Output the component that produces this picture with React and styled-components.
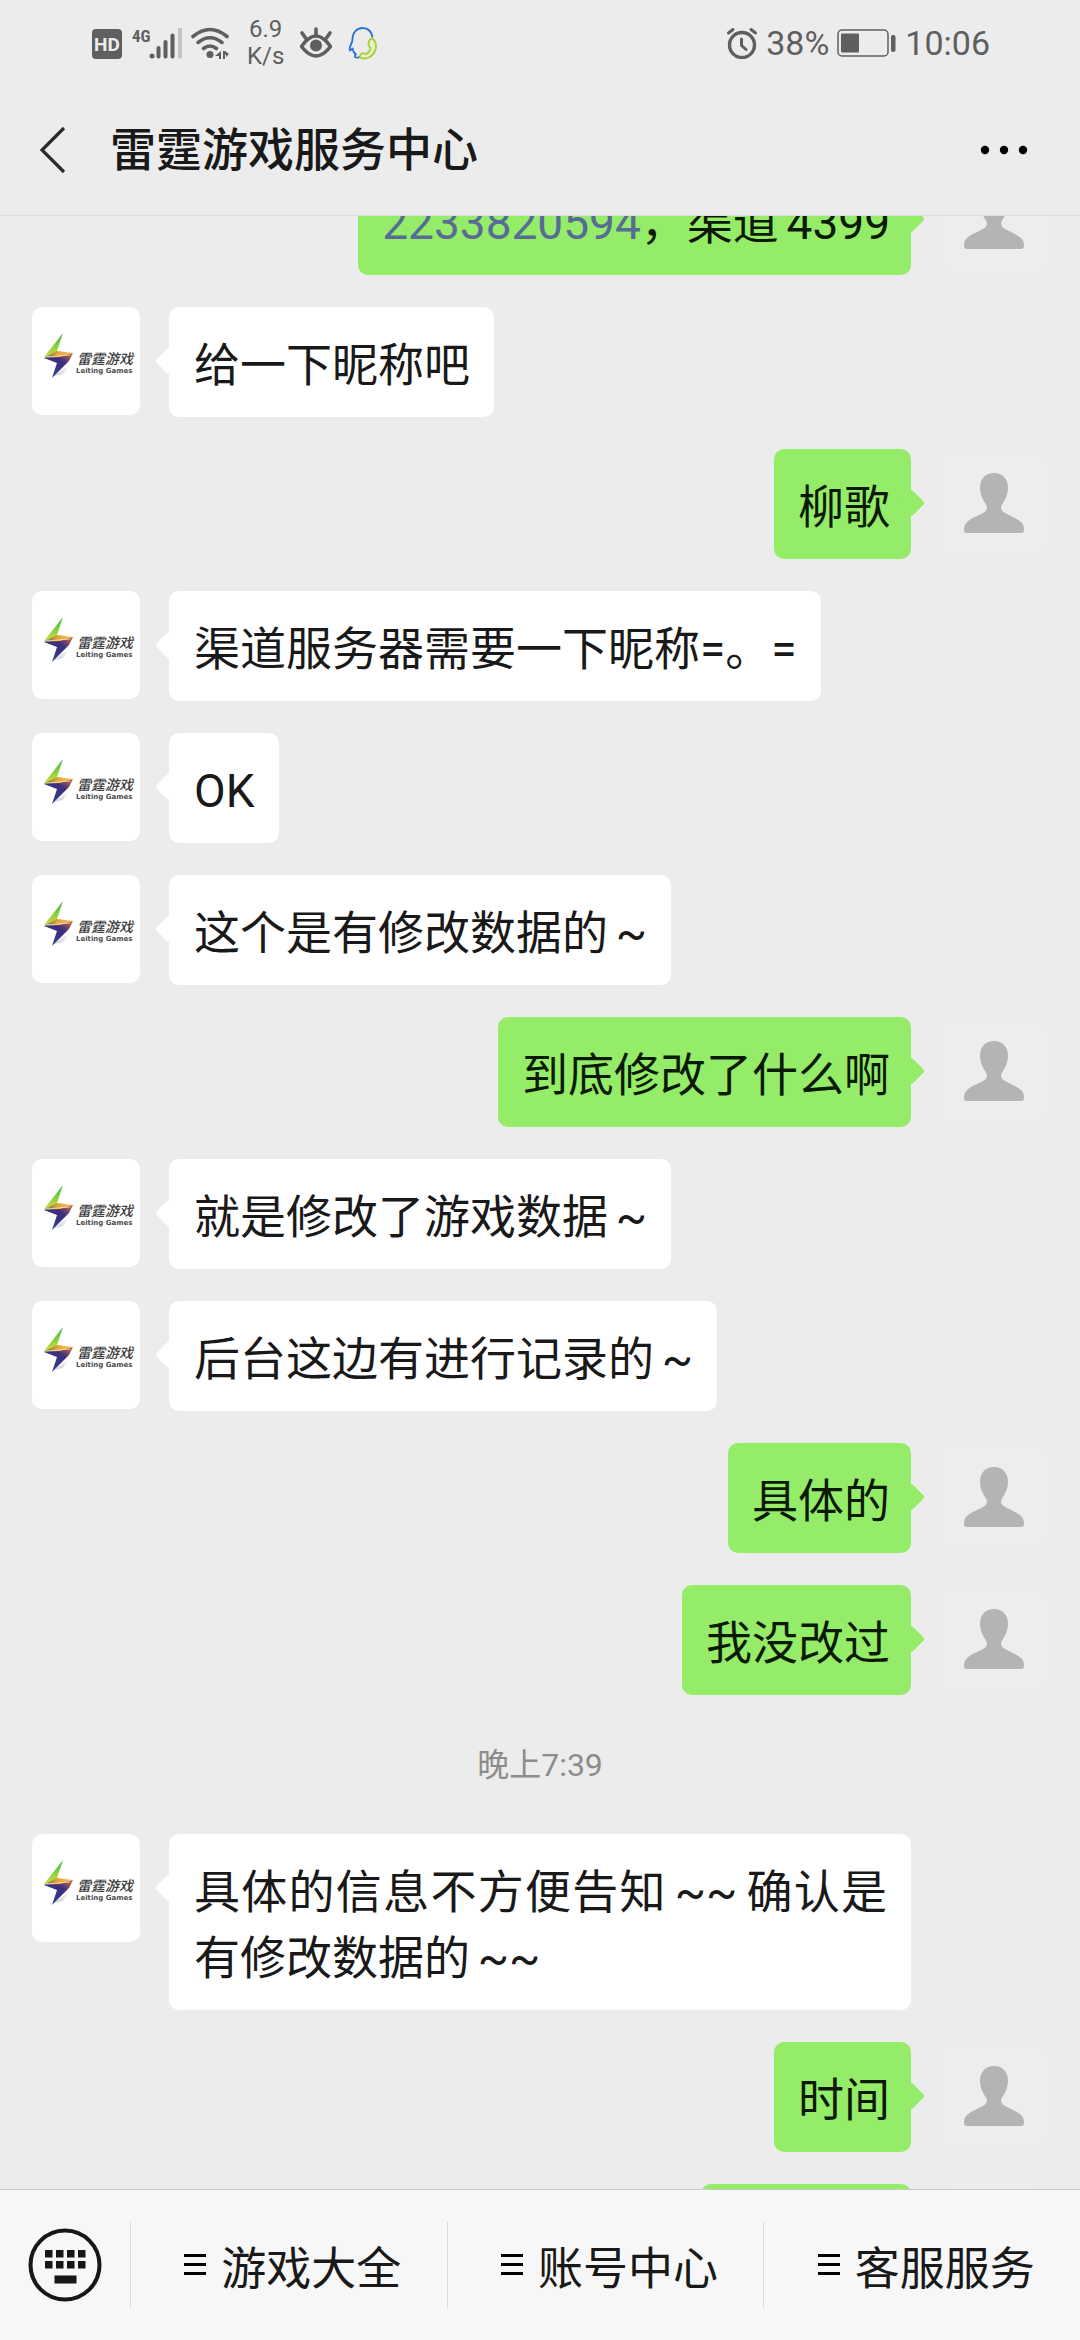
import { useLayoutEffect, useRef } from "react";
import styled, { createGlobalStyle } from "styled-components";

// \u2006 is a narrow space between Chinese and the half-width signs
const MESSAGES = [
  { id: 1, mine: true, link: "2233820594", text: "，渠道\u20064399" },
  { id: 2, text: "给一下昵称吧" },
  { id: 3, mine: true, text: "柳歌" },
  { id: 4, text: "渠道服务器需要一下昵称=。=" },
  { id: 5, text: "OK" },
  { id: 6, text: "这个是有修改数据的\u2006~" },
  { id: 7, mine: true, text: "到底修改了什么啊" },
  { id: 8, text: "就是修改了游戏数据\u2006~" },
  { id: 9, text: "后台这边有进行记录的\u2006~" },
  { id: 10, mine: true, text: "具体的" },
  { id: 11, mine: true, text: "我没改过" },
  { id: 12, time: "晚上7:39" },
  { id: 13, text: "具体的信息不方便告知\u2006~~\u2006确认是有修改数据的\u2006~~" },
  { id: 14, mine: true, text: "时间" },
  { id: 15, mine: true, text: "" },
];

const MENUS = ["游戏大全", "账号中心", "客服服务"];

// how far the conversation is scrolled when the page opens
const START_SCROLL = 51;

const NetworkIcons = () => (
  <svg width="140" height="34" viewBox="0 0 140 34" fill="#5f5f5f">
    <rect x="0" y="3" width="30" height="30" rx="4" />
    <text x="15" y="25" textAnchor="middle" fontSize="19" fontWeight="700" fill="#ececec">
      HD
    </text>
    <text x="40" y="16" fontSize="17" fontWeight="700" fontFamily="Roboto Condensed, Roboto">
      4G
    </text>
    <circle cx="60" cy="30" r="2.5" />
    <rect x="64.500" y="20" width="4" height="12.500" rx="2" />
    <rect x="71.500" y="14" width="4" height="18.500" rx="2" />
    <rect x="78.500" y="7.500" width="4" height="25" rx="2" />
    <rect x="86" y="2" width="4" height="30.500" rx="1" fill="#c4c4c4" />
    <g fill="none" stroke="#5f5f5f" strokeWidth="3.600" strokeLinecap="round">
      <path d="M101 10.500 Q118 -3.500 135 10.500" />
      <path d="M106 16.500 Q118 7 130 16.500" />
      <path d="M111.500 22.500 Q118 17.500 124.500 22.500" />
    </g>
    <circle cx="118" cy="28.500" r="3.500" />
    <path d="M129 25 v8 h-2 v-3 l-4 0 z M131 33 v-8 h2 l4 3 l-3 3 v-2.500 h-1 v4.500 z" />
  </svg>
);

const EyeIcon = () => (
  <svg width="34" height="32" viewBox="0 0 34 32">
    <g fill="none" stroke="#5f5f5f" strokeWidth="3.600" strokeLinecap="round">
      <path d="M2.500 19.500 Q17 -1.500 31.500 19.500 Q17 38.500 2.500 19.500 Z" strokeLinejoin="round" />
      <path d="M17 8 V2 M6.500 11 L3 6 M27.500 11 L31 6" />
    </g>
    <circle cx="17" cy="18.500" r="6" fill="#5f5f5f" />
  </svg>
);

const ServiceIcon = () => (
  <svg width="30" height="34" viewBox="0 0 30 34" fill="none" strokeWidth="1.800" strokeLinejoin="round">
    <path
      d="M24.500 11.500 C23.500 5 19.500 2 14.500 2 C8.500 2 4.500 7 4.500 13 C4.500 15 4 16.500 3 18.500 C1.500 21.500 1.500 23.500 2 24.500 C3 24.500 3.500 23 4.500 22.500 C5 25.500 6.500 27.500 8 28.500 C6.500 29.500 6 31 8 31.500 C9.500 32 12 31 13 30.500"
      stroke="#2a72d8"
    />
    <path
      d="M23 12.500 C27 13 29.500 19 27 25 C24 31.500 18 33.500 13 32 C11.500 31 12 29 13.500 27.500 C15 26.500 16.500 28 18 28 C20.500 27 22 25 22.500 22.500 C22.500 21 20.500 20.500 20.500 18.500 C20.500 16 21.500 13.500 23 12.500 Z"
      stroke="#a8cf3c"
      fill="#e6f2c4"
    />
  </svg>
);

const AlarmIcon = () => (
  <svg width="32" height="32" viewBox="0 0 32 32" fill="none" stroke="#5f5f5f" strokeLinecap="round">
    <circle cx="16" cy="18" r="12.500" strokeWidth="3.400" />
    <path d="M15.500 12 V18.500 L20 22.500" strokeWidth="3" strokeLinejoin="round" />
    <path d="M2.500 6 L7 2.500 M29.500 6 L25 2.500" strokeWidth="3" />
  </svg>
);

const BatteryIcon = () => (
  <svg width="60" height="28" viewBox="0 0 60 28">
    <rect x="1" y="1" width="50" height="26" rx="4" fill="none" stroke="#5f5f5f" strokeWidth="1.500" />
    <rect x="4" y="4.500" width="18" height="19" rx="1" fill="#5f5f5f" />
    <rect x="54" y="6" width="4.500" height="17" rx="2" fill="#5f5f5f" />
  </svg>
);

const BackIcon = () => (
  <svg width="28" height="48" viewBox="0 0 28 48" fill="none" stroke="#2b2b2b" strokeWidth="3.200">
    <path d="M26 2 L4 24 L26 46" />
  </svg>
);

const MoreIcon = () => (
  <svg width="48" height="12" viewBox="0 0 48 12">
    <circle cx="5" cy="6" r="4.200" />
    <circle cx="24" cy="6" r="4.200" />
    <circle cx="43" cy="6" r="4.200" />
  </svg>
);

const PersonIcon = () => (
  <svg width="60" height="60" viewBox="0 0 60 60">
    <path
      d="M30 0 C21.500 0 16 6 16 14.500 C16 22 19 27 22 31.500 C23.500 34 23 37 20.500 39 C15 42.500 8 44.500 3 49 C0.500 51.500 0 53.500 0 57 C0 59 1 60 3 60 H57 C59 60 60 59 60 57 C60 53.500 59.500 51.500 57 49 C52 44.500 45 42.500 39.500 39 C37 37 36.500 34 38 31.500 C41 27 44 22 44 14.500 C44 6 38.500 0 30 0 Z"
      fill="#b4b4b4"
    />
  </svg>
);

const LeitingLogo = () => (
  <svg width="108" height="108" viewBox="0 0 108 108">
    <defs>
      <linearGradient id="boltTop" x1="0" y1="0" x2="0" y2="1">
        <stop offset="0" stopColor="#3fae4a" />
        <stop offset="0.600" stopColor="#8fd640" />
        <stop offset="1" stopColor="#d9d63c" />
      </linearGradient>
      <linearGradient id="boltMid" x1="0" y1="0" x2="1" y2="0">
        <stop offset="0" stopColor="#3c5a6e" />
        <stop offset="0.450" stopColor="#e8a23a" />
        <stop offset="1" stopColor="#f3c65a" />
      </linearGradient>
      <linearGradient id="boltLow" x1="1" y1="0" x2="0" y2="1">
        <stop offset="0" stopColor="#d8743c" />
        <stop offset="0.350" stopColor="#3d2f7c" />
        <stop offset="1" stopColor="#2b3f96" />
      </linearGradient>
      <linearGradient id="boltShade" x1="0" y1="1" x2="1" y2="0">
        <stop offset="0" stopColor="#c9cbd2" />
        <stop offset="1" stopColor="#ffffff" />
      </linearGradient>
    </defs>
    <path d="M22 69 L38 57 L31 67 Z" fill="url(#boltShade)" />
    <path d="M31 26 L12 50 L26 48 L30 45 L25 44 Z" fill="url(#boltTop)" />
    <path d="M12 51 L25 44 L41 46 L36 52 Z" fill="url(#boltMid)" />
    <path d="M12 51 L28 50 L41 46 L37 54 L20 71 L25 56 Z" fill="url(#boltLow)" />
    <path d="M14 50 L38 48" stroke="#fbe9b0" strokeWidth="0.800" />
    <text
      x="45"
      y="57"
      fontSize="14"
      fontWeight="500"
      fontStyle="italic"
      fill="#3c3c3c"
      fontFamily="Noto Sans CJK SC, sans-serif"
    >
      雷霆游戏
    </text>
    <text x="44" y="66" fontSize="7" fontWeight="700" fill="#4c4c4c" fontFamily="DejaVu Sans, sans-serif">
      Leiting Games
    </text>
  </svg>
);

const KeyboardIcon = () => (
  <svg width="74" height="74" viewBox="0 0 74 74" fill="#171717">
    <circle cx="37" cy="37" r="34.500" fill="none" stroke="#171717" strokeWidth="4" />
    {[17, 28, 39, 50].map((x) => (
      <path key={x} d={`M${x} 22 h7.500 v7.500 h-7.500 z M${x} 33 h7.500 v7.500 h-7.500 z`} />
    ))}
    <rect x="26.500" y="47.500" width="22" height="8" />
  </svg>
);

const MenuIcon = () => (
  <svg width="22" height="22" viewBox="0 0 22 22">
    <path d="M0 0 h22 v3 H0 z M0 9 h22 v3 H0 z M0 18 h22 v3 H0 z" />
  </svg>
);

const Message = ({ mine, link, text }) => (
  <MessageRow $mine={mine}>
    <Avatar $mine={mine}>{mine ? <PersonIcon /> : <LeitingLogo />}</Avatar>
    <Bubble $mine={mine} $blank={!text}>
      {link && <NumberLink href={`tel:${link}`}>{link}</NumberLink>}
      {text}
    </Bubble>
  </MessageRow>
);

const App = () => {
  const chatRef = useRef(null);

  useLayoutEffect(() => {
    chatRef.current.scrollTop = START_SCROLL;
  }, []);

  return (
    <Page lang="zh-CN">
      <GlobalStyle />
      <StatusBar>
        <StatusGroup $gap={15}>
          <NetworkIcons />
          <Speed>
            6.9
            <br />
            K/s
          </Speed>
          <EyeIcon />
          <ServiceIcon />
        </StatusGroup>
        <StatusGroup $gap={8}>
          <AlarmIcon />
          <span>38%</span>
          <BatteryIcon />
          <span>10:06</span>
        </StatusGroup>
      </StatusBar>
      <NavBar>
        <IconButton aria-label="返回">
          <BackIcon />
        </IconButton>
        <Title>雷霆游戏服务中心</Title>
        <IconButton aria-label="更多">
          <MoreIcon />
        </IconButton>
      </NavBar>
      <Chat ref={chatRef}>
        {MESSAGES.map(({ id, time, ...message }) =>
          time ? <Time key={id}>{time}</Time> : <Message key={id} {...message} />
        )}
      </Chat>
      <BottomBar>
        <KeyboardButton aria-label="键盘">
          <KeyboardIcon />
        </KeyboardButton>
        {MENUS.map((menu) => (
          <MenuButton key={menu}>
            <MenuIcon />
            {menu}
          </MenuButton>
        ))}
      </BottomBar>
    </Page>
  );
};

export default App;

const GlobalStyle = createGlobalStyle`
  * {
    box-sizing: border-box;
  }
  body {
    margin: 0;
    background: #ececec;
    color: #191919;
    font-family: Roboto, "Noto Sans CJK SC", sans-serif;
  }
  svg {
    display: block;
    flex-shrink: 0;
  }
`;

const Page = styled.div`
  display: flex;
  flex-direction: column;
  height: 100vh;
`;

const StatusBar = styled.div`
  display: flex;
  align-items: center;
  justify-content: space-between;
  height: 85px;
  padding: 0 90px 0 92px;
  color: #5f5f5f;
  font-size: 34px;
  line-height: 40px;
`;

const StatusGroup = styled.div`
  display: flex;
  align-items: center;
  gap: ${({ $gap }) => $gap}px;
`;

const Speed = styled.div`
  font-size: 24px;
  line-height: 27px;
  text-align: center;
`;

const NavBar = styled.header`
  display: flex;
  align-items: center;
  gap: 44px;
  height: 131px;
  padding: 0 52px 0 38px;
  border-bottom: 1px solid #dfdfdf;
`;

const PlainButton = styled.button`
  display: flex;
  align-items: center;
  justify-content: center;
  padding: 0;
  border: 0;
  background: none;
  color: inherit;
  font-family: inherit;
  cursor: pointer;
`;

const IconButton = styled(PlainButton)`
  height: 100%;
`;

const Title = styled.h1`
  flex: 1;
  margin: 0;
  font-size: 46px;
  font-weight: 500;
  line-height: 66px;
`;

const Chat = styled.main`
  flex: 1;
  min-height: 0;
  display: flex;
  flex-direction: column;
  gap: 32px;
  padding: 0 32px 32px;
  overflow-y: auto;
  scrollbar-width: none;
`;

const MessageRow = styled.div`
  display: flex;
  flex-direction: ${({ $mine }) => ($mine ? "row-reverse" : "row")};
  align-items: flex-start;
  flex-shrink: 0;
  gap: 29px;
`;

const Avatar = styled.div`
  display: flex;
  align-items: center;
  justify-content: center;
  flex-shrink: 0;
  width: 108px;
  height: 108px;
  border-radius: 10px;
  background: ${({ $mine }) => ($mine ? "#ededed" : "#ffffff")};
  overflow: hidden;
`;

const Bubble = styled.div`
  position: relative;
  min-width: ${({ $blank }) => ($blank ? 210 : 110)}px;
  min-height: 110px;
  max-width: 742px;
  padding: ${({ $mine }) => ($mine ? "25px 21px 19px 24px" : "25px 24px 19px 25px")};
  border-radius: 10px;
  background: ${({ $mine }) => ($mine ? "#95ec69" : "#ffffff")};
  color: ${({ $mine }) => ($mine ? "#0b1a05" : "#191919")};
  font-size: 46px;
  line-height: 66px;
  text-align: justify;

  &::before {
    content: "";
    position: absolute;
    top: 44px;
    ${({ $mine }) => ($mine ? "right" : "left")}: -10px;
    width: 20px;
    height: 20px;
    border-radius: 3px;
    background: inherit;
    transform: rotate(45deg);
  }
`;

const NumberLink = styled.a`
  color: #576b95;
  text-decoration: none;
`;

const Time = styled.div`
  flex-shrink: 0;
  padding: 15px 0 14px;
  color: #8c8c8c;
  font-size: 32px;
  line-height: 46px;
  text-align: center;
`;

const BottomBar = styled.footer`
  display: flex;
  align-items: center;
  height: 151px;
  border-top: 1px solid #c9c9c9;
  background: #f7f7f7;
`;

const KeyboardButton = styled(PlainButton)`
  width: 130px;
  height: 100%;
`;

const MenuButton = styled(PlainButton)`
  flex: 1;
  gap: 15px;
  height: 86px;
  padding-left: 8px;
  border-left: 1px solid #dcdcdc;
  font-size: 45px;
`;
